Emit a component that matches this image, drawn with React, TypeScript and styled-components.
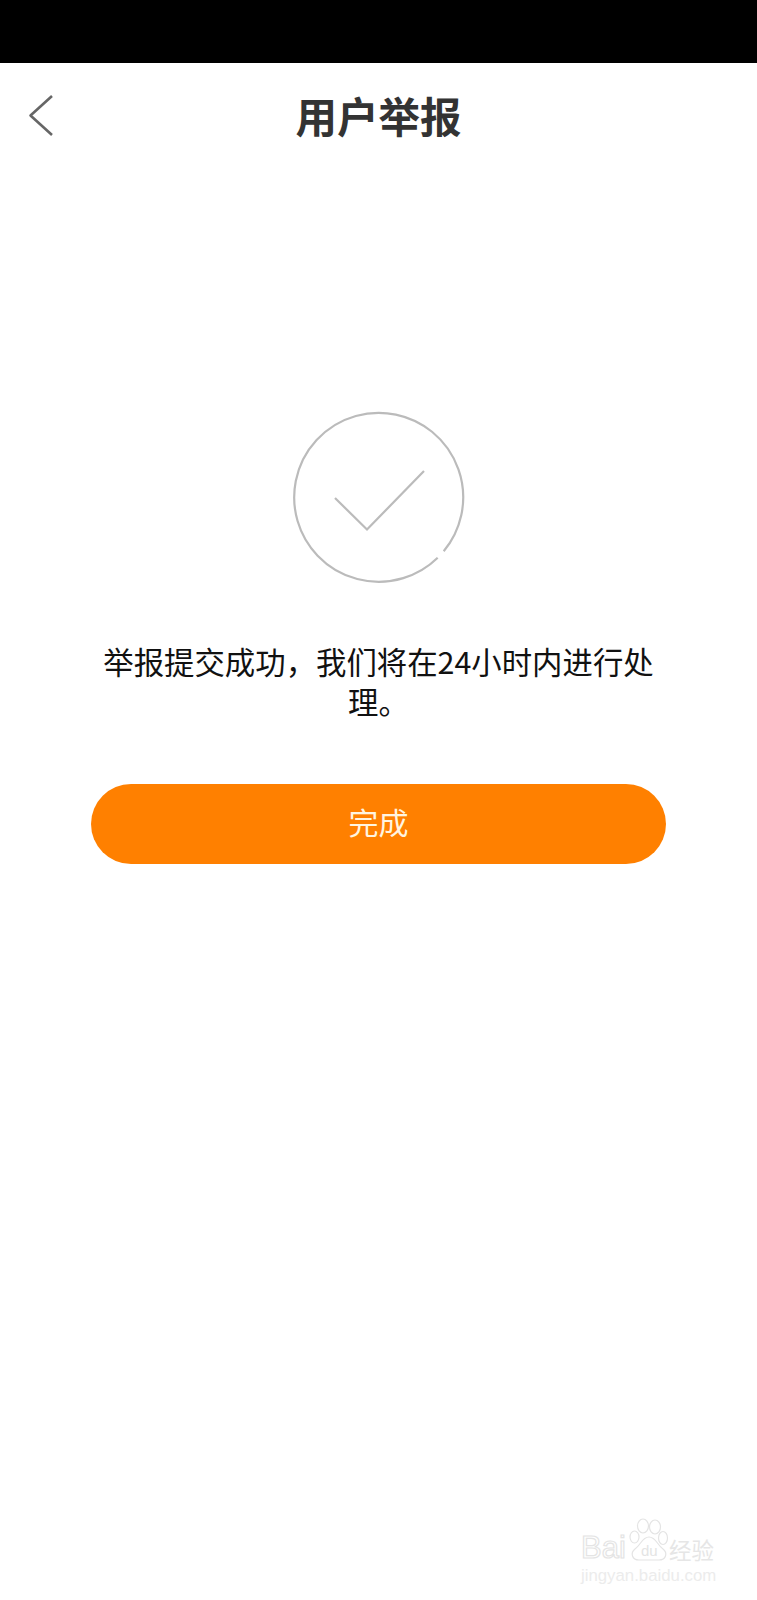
import styled, { createGlobalStyle } from 'styled-components';

const GlobalStyle = createGlobalStyle`
    html, body {
        margin: 0;
        padding: 0;
        background: #fff;
    }
`;

const Page = styled.main`
    position: relative;
    width: 757px;
    height: 1600px;
    overflow: hidden;
    background: #fff;
    font-family: "Noto Sans CJK SC", "Liberation Sans", sans-serif;
`;

const StatusBar = styled.div`
    height: 63px;
    background: #000;
`;

const NavBar = styled.nav`
    height: 108px;
    display: grid;
    grid-template-columns: 1fr auto 1fr;
    align-items: center;
`;

const BackButton = styled.button`
    justify-self: start;
    width: 30px;
    height: 46px;
    margin-left: 26px;
    padding: 0;
    border: 0;
    background: none;

    svg {
        display: block;
    }
`;

const Title = styled.h1`
    margin: 0;
    padding-bottom: 2px;
    font-size: 41.5px;
    line-height: 1;
    font-weight: 700;
    color: #333;
`;

const Content = styled.section`
    display: flex;
    flex-direction: column;
    align-items: center;
    padding-top: 240px;
`;

const ResultIcon = styled.svg`
    display: block;
    width: 172px;
    height: 172px;
`;

const Message = styled.p`
    width: 560px;
    margin: 58px 0 0;
    font-size: 30.4px;
    line-height: 40px;
    text-align: center;
    color: #111;
`;

const DoneButton = styled.button`
    width: 575px;
    height: 80px;
    margin-top: 63px;
    padding: 0 0 6px;
    border: 0;
    border-radius: 40px;
    background: #ff8000;
    color: #fff5e0;
    font-family: inherit;
    font-size: 30px;
`;

const Watermark = styled.div`
    position: absolute;
    left: 581px;
    top: 1518px;
    display: flex;
    flex-direction: column;
    gap: 5px;
    width: 140px;
`;

const BrandRow = styled.div`
    display: flex;
    align-items: flex-end;
`;

const BrandText = styled.span`
    width: 48px;
    font-family: "Liberation Sans", sans-serif;
    font-size: 31px;
    line-height: 26px;
    color: #fff;
    -webkit-text-stroke: 1.2px #e4e4e4;
`;

const PawMark = styled.svg`
    flex: none;
    width: 40px;
    height: 43px;

    text {
        font-family: "Liberation Sans", sans-serif;
        font-size: 15px;
        fill: #e4e4e4;
        stroke: none;
    }
`;

const BrandCn = styled.span`
    font-size: 22.5px;
    line-height: 24px;
    white-space: nowrap;
    color: #e6e6e6;
`;

const BrandUrl = styled.span`
    font-family: "Liberation Sans", sans-serif;
    font-size: 16.8px;
    line-height: 20px;
    white-space: nowrap;
    color: #ececec;
`;

export default function App() {
    return (
        <Page>
            <GlobalStyle />
            <StatusBar />
            <NavBar>
                <BackButton aria-label="返回">
                    <svg width="30" height="46" viewBox="0 0 30 46" fill="none">
                        <path d="M26 2 L4.5 21.5 L26 41" stroke="#666" strokeWidth="2.6" strokeLinejoin="round" />
                    </svg>
                </BackButton>
                <Title>用户举报</Title>
            </NavBar>
            <Content>
                <ResultIcon viewBox="0 0 172 172" fill="none" stroke="#bbb" strokeWidth="2.2">
                    <path d="M144.7 146.8 A84.5 84.5 0 1 1 150.7 140.3" />
                    <path d="M42 87 L74 118.5 L131 60" />
                </ResultIcon>
                <Message>举报提交成功，我们将在24小时内进行处理。</Message>
                <DoneButton>完成</DoneButton>
            </Content>
            <Watermark>
                <BrandRow>
                    <BrandText>Bai</BrandText>
                    <PawMark viewBox="0 0 40 43" fill="#fff" stroke="#e4e4e4" strokeWidth="1.2">
                        <ellipse cx="14" cy="8" rx="5.5" ry="7" />
                        <ellipse cx="26" cy="9" rx="5.5" ry="7" />
                        <ellipse cx="5.5" cy="19" rx="4.5" ry="6" />
                        <ellipse cx="34" cy="20" rx="4.5" ry="6.5" />
                        <path d="M20 19 C13 19 12 27 6 31 C1 35 3 42 10 42 C15 42 25 42 30 42 C37 42 39 35 34 31 C28 27 27 19 20 19 Z" />
                        <text x="12" y="38">du</text>
                    </PawMark>
                    <BrandCn>经验</BrandCn>
                </BrandRow>
                <BrandUrl>jingyan.baidu.com</BrandUrl>
            </Watermark>
        </Page>
    );
}
